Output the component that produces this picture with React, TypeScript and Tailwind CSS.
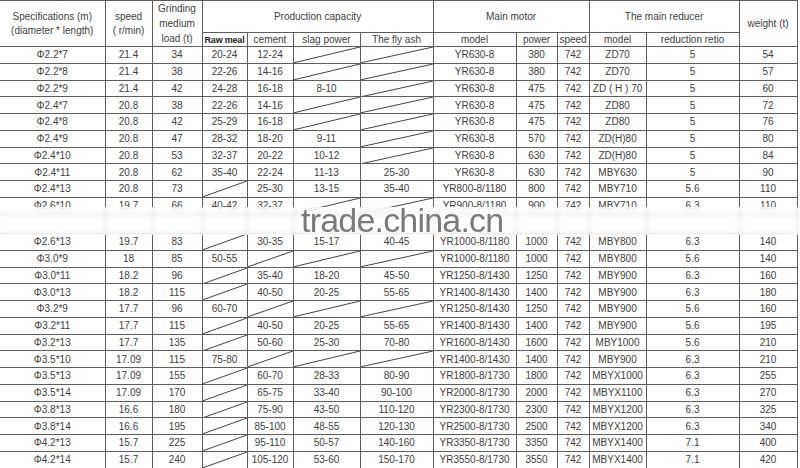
import React from 'react';

type Row = string[];

// "/" marks a cell crossed out with a diagonal line
const rows: Row[] = [
  ['Φ2.2*7', '21.4', '34', '20-24', '12-24', '/', '/', 'YR630-8', '380', '742', 'ZD70', '5', '54'],
  ['Φ2.2*8', '21.4', '38', '22-26', '14-16', '/', '/', 'YR630-8', '380', '742', 'ZD70', '5', '57'],
  ['Φ2.2*9', '21.4', '42', '24-28', '16-18', '8-10', '/', 'YR630-8', '475', '742', 'ZD ( H ) 70', '5', '60'],
  ['Φ2.4*7', '20.8', '38', '22-26', '14-16', '/', '/', 'YR630-8', '475', '742', 'ZD80', '5', '72'],
  ['Φ2.4*8', '20.8', '42', '25-29', '16-18', '/', '/', 'YR630-8', '475', '742', 'ZD80', '5', '76'],
  ['Φ2.4*9', '20.8', '47', '28-32', '18-20', '9-11', '/', 'YR630-8', '570', '742', 'ZD(H)80', '5', '80'],
  ['Φ2.4*10', '20.8', '53', '32-37', '20-22', '10-12', '/', 'YR630-8', '630', '742', 'ZD(H)80', '5', '84'],
  ['Φ2.4*11', '20.8', '62', '35-40', '22-24', '11-13', '25-30', 'YR630-8', '630', '742', 'MBY630', '5', '90'],
  ['Φ2.4*13', '20.8', '73', '/', '25-30', '13-15', '35-40', 'YR800-8/1180', '800', '742', 'MBY710', '5.6', '110'],
  ['Φ2.6*10', '19.7', '66', '40-42', '32-37', '/', '/', 'YR900-8/1180', '900', '742', 'MBY710', '6.3', '110'],
  ['', '', '', '', '', '', '', '', '', '', '', '', ''],
  ['Φ2.6*13', '19.7', '83', '/', '30-35', '15-17', '40-45', 'YR1000-8/1180', '1000', '742', 'MBY800', '6.3', '140'],
  ['Φ3.0*9', '18', '85', '50-55', '/', '/', '/', 'YR1000-8/1180', '1000', '742', 'MBY800', '5.6', '140'],
  ['Φ3.0*11', '18.2', '96', '/', '35-40', '18-20', '45-50', 'YR1250-8/1430', '1250', '742', 'MBY900', '6.3', '160'],
  ['Φ3.0*13', '18.2', '115', '/', '40-50', '20-25', '55-65', 'YR1400-8/1430', '1400', '742', 'MBY900', '6.3', '180'],
  ['Φ3.2*9', '17.7', '96', '60-70', '/', '/', '/', 'YR1250-8/1430', '1250', '742', 'MBY900', '5.6', '160'],
  ['Φ3.2*11', '17.7', '115', '/', '40-50', '20-25', '55-65', 'YR1400-8/1430', '1400', '742', 'MBY900', '5.6', '195'],
  ['Φ3.2*13', '17.7', '135', '/', '50-60', '25-30', '70-80', 'YR1600-8/1430', '1600', '742', 'MBY1000', '5.6', '210'],
  ['Φ3.5*10', '17.09', '115', '75-80', '/', '/', '/', 'YR1400-8/1430', '1400', '742', 'MBY900', '6.3', '210'],
  ['Φ3.5*13', '17.09', '155', '/', '60-70', '28-33', '80-90', 'YR1800-8/1730', '1800', '742', 'MBYX1000', '6.3', '255'],
  ['Φ3.5*14', '17.09', '170', '/', '65-75', '33-40', '90-100', 'YR2000-8/1730', '2000', '742', 'MBYX1100', '6.3', '270'],
  ['Φ3.8*13', '16.6', '180', '/', '75-90', '43-50', '110-120', 'YR2300-8/1730', '2300', '742', 'MBYX1200', '6.3', '325'],
  ['Φ3.8*14', '16.6', '195', '/', '85-100', '48-55', '120-130', 'YR2500-8/1730', '2500', '742', 'MBYX1200', '6.3', '340'],
  ['Φ4.2*13', '15.7', '225', '/', '95-110', '50-57', '140-160', 'YR3350-8/1730', '3350', '742', 'MBYX1400', '7.1', '400'],
  ['Φ4.2*14', '15.7', '240', '/', '105-120', '53-60', '150-170', 'YR3550-8/1730', '3550', '742', 'MBYX1400', '7.1', '420'],
];

const widths = [105, 47, 50, 45, 46, 67, 73, 83, 41, 32, 57, 93, 58];

const cell = 'border border-[#5e5e5e] p-0 text-center whitespace-nowrap overflow-hidden';

function Slash() {
  return (
    <svg className="absolute inset-0 w-full h-full" preserveAspectRatio="none" viewBox="0 0 100 100">
      <line x1="0" y1="100" x2="100" y2="0" stroke="#444" strokeWidth="1" vectorEffect="non-scaling-stroke" />
    </svg>
  );
}

export default function App() {
  return (
    <div
      className="relative w-[800px] h-[468px] overflow-hidden bg-white text-[#404040] text-[10px]"
      style={{ fontFamily: '"Liberation Sans", Arial, sans-serif' }}
    >
      <table className="table-fixed border-collapse w-[797px] -mt-px">
        <colgroup>
          {widths.map((w, i) => (
            <col key={i} style={{ width: w }} />
          ))}
        </colgroup>
        <thead>
          <tr className="h-[31px] border-t-2 border-[#5e5e5e]">
            <th rowSpan={2} className={`${cell} border-l-0 font-normal leading-[14px]`}>
              Specifications (m)
              <br />
              (diameter * length)
            </th>
            <th rowSpan={2} className={`${cell} font-normal leading-[14px]`}>
              speed
              <br />( r/min)
            </th>
            <th rowSpan={2} className={`${cell} font-normal leading-[15px]`}>
              Grinding
              <br />
              medium
              <br />
              load (t)
            </th>
            <th colSpan={4} className={`${cell} font-normal`}>Production capacity</th>
            <th colSpan={3} className={`${cell} font-normal`}>Main motor</th>
            <th colSpan={2} className={`${cell} font-normal`}>The main reducer</th>
            <th rowSpan={2} className={`${cell} font-normal`}>weight (t)</th>
          </tr>
          <tr className="h-[13px] leading-[12px]">
            <th className={`${cell} font-bold text-[9px] tracking-[-0.2px] text-[#222]`}>Raw meal</th>
            <th className={`${cell} font-normal`}>cement</th>
            <th className={`${cell} font-normal`}>slag power</th>
            <th className={`${cell} font-normal`}>The fly ash</th>
            <th className={`${cell} font-normal`}>model</th>
            <th className={`${cell} font-normal`}>power</th>
            <th className={`${cell} font-normal`}>speed</th>
            <th className={`${cell} font-normal`}>model</th>
            <th className={`${cell} font-normal`}>reduction retio</th>
          </tr>
        </thead>
        <tbody>
          {rows.map((r, i) => (
            <tr key={i} className={`${i === 10 ? 'h-[19.5px]' : 'h-[16.75px]'} leading-[15px]`}>
              {r.map((v, j) => (
                <td key={j} className={`${cell} relative ${j === 0 ? 'border-l-0' : ''}`}>
                  {v === '/' ? <Slash /> : v}
                </td>
              ))}
            </tr>
          ))}
        </tbody>
      </table>

      {/* watermark band over the stitched rows */}
      <div className="absolute left-0 top-[207px] w-full h-[28px] bg-white/75 backdrop-blur-[2px]" />
      <div
        className="absolute left-[301px] top-[205px] h-[30px] text-[34px] leading-[30px] tracking-[-0.8px] text-[#7a7a7a]"
        style={{ fontFamily: '"Liberation Sans", Arial, sans-serif' }}
      >
        trade.china.cn
      </div>
    </div>
  );
}
